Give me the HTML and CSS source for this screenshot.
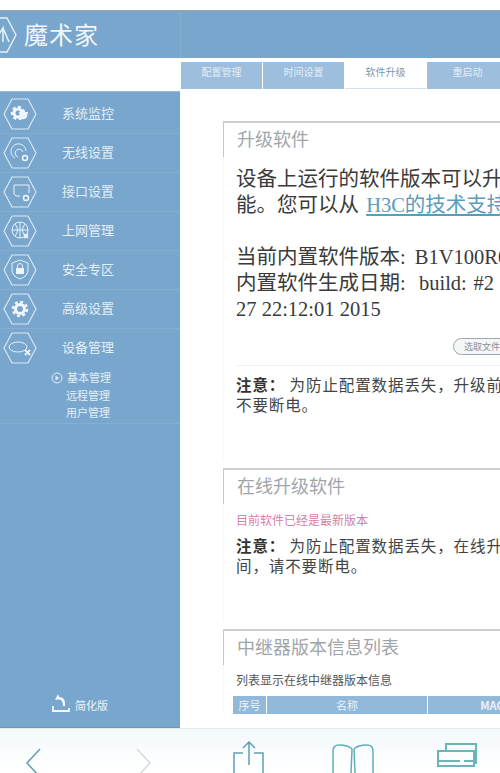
FILE: index.html
```html
<!DOCTYPE html>
<html lang="zh-CN">
  <head>
    <meta charset="UTF-8" />
    <meta name="viewport" content="width=device-width, initial-scale=1.0" />
    <title>魔术家</title>
    <link rel="stylesheet" href="styles.css">
  </head>
  <body>
    <div class="page">
      <div class="header">
        <div class="brand">
          <svg class="brand-icon" viewBox="0 0 38 36" width="38" height="36">
            <polygon points="10,1 28,1 37,18 28,35 10,35 1,18" fill="none" stroke="#e6f0f8" stroke-width="1.4" />
            <path d="M15 25 L24 11 L24 25 M24 11 L30 25" fill="none" stroke="#e6f0f8" stroke-width="1.6" />
          </svg>
          <span class="brand-name">魔术家</span>
        </div>
        <div class="header-rest"></div>
      </div>

      <div class="middle">
        <div class="left">
          <div class="sidebar">
            <div class="nav-item">
              <svg class="hex" viewBox="0 0 34 32" width="34" height="32">
                <polygon points="9,1 25,1 33,16 25,31 9,31 1,16" />
                <circle class="gear" cx="15" cy="15" r="4" />
                <circle class="teeth" cx="15" cy="15" r="6" />
                <path class="solid" d="M16 14h9l-1 5q-3 4-7 1z" />
              </svg>
              <span>系统监控</span>
            </div>
            <div class="nav-item">
              <svg class="hex" viewBox="0 0 34 32" width="34" height="32">
                <polygon points="9,1 25,1 33,16 25,31 9,31 1,16" />
                <path class="line" d="M12 21a7.500 7.500 0 1 1 11-7M15 20a4 4 0 1 1 5-5" />
                <circle class="ring" cx="22" cy="21" r="2.500" />
              </svg>
              <span>无线设置</span>
            </div>
            <div class="nav-item">
              <svg class="hex" viewBox="0 0 34 32" width="34" height="32">
                <polygon points="9,1 25,1 33,16 25,31 9,31 1,16" />
                <path class="line" d="M17 20h-4l-2-2v-9h15v8" />
                <circle class="ring" cx="23" cy="22" r="2.500" />
              </svg>
              <span>接口设置</span>
            </div>
            <div class="nav-item">
              <svg class="hex" viewBox="0 0 34 32" width="34" height="32">
                <polygon points="9,1 25,1 33,16 25,31 9,31 1,16" />
                <circle class="line" cx="17" cy="15" r="8" />
                <path class="line" d="M9 15h16M17 7v16M12 9q5 6 0 12M22 9q-5 6 0 12" />
                <path class="line thick" d="M21 19l4 4M25 19l-4 4" />
              </svg>
              <span>上网管理</span>
            </div>
            <div class="nav-item">
              <svg class="hex" viewBox="0 0 34 32" width="34" height="32">
                <polygon points="9,1 25,1 33,16 25,31 9,31 1,16" />
                <path class="line" d="M17 6l8 3v7q0 6-8 9q-8-3-8-9v-7z" />
                <rect class="solid" x="13" y="14" width="8" height="6" />
                <path class="line" d="M14.500 14v-2a2.500 2.500 0 0 1 5 0v2" />
              </svg>
              <span>安全专区</span>
            </div>
            <div class="nav-item">
              <svg class="hex" viewBox="0 0 34 32" width="34" height="32">
                <polygon points="9,1 25,1 33,16 25,31 9,31 1,16" />
                <circle class="gear" cx="17" cy="16" r="4.500" />
                <circle class="teeth" cx="17" cy="16" r="7" />
              </svg>
              <span>高级设置</span>
            </div>
            <div class="nav-item nav-open">
              <svg class="hex" viewBox="0 0 34 32" width="34" height="32">
                <polygon points="9,1 25,1 33,16 25,31 9,31 1,16" />
                <ellipse class="line" cx="15" cy="15" rx="9" ry="5" />
                <path class="line thick" d="M22 18l5 5M27 18l-5 5" />
              </svg>
              <span>设备管理</span>
            </div>
            <div class="subnav">
              <div class="sub-item">
                <svg class="sub-arrow" viewBox="0 0 12 12" width="12" height="12">
                  <circle cx="6" cy="6" r="5" fill="none" stroke="#e4eef6" />
                  <path d="M4.500 3.500l3.500 2.500-3.500 2.500z" fill="#e4eef6" />
                </svg>
                <span>基本管理</span>
              </div>
              <div class="sub-item">远程管理</div>
              <div class="sub-item">用户管理</div>
            </div>
            <div class="simple">
              <svg viewBox="0 0 20 20" width="20" height="20">
                <path d="M2 13v5h16v-3" fill="none" stroke="#f2f7fb" stroke-width="1.800" />
                <path d="M7 1l-3 6 3-.5q5-.5 5 6.500h2q1-9-6-9z" fill="#f2f7fb" />
              </svg>
              <span>简化版</span>
            </div>
          </div>
        </div>

        <div class="right">
          <div class="tabs">
            <div class="tab">配置管理</div>
            <div class="tab">时间设置</div>
            <div class="tab active">软件升级</div>
            <div class="tab">重启动</div>
          </div>
          <div class="content">
            <div class="section section-upgrade">
              <h3>升级软件</h3>
              <div class="section-body">
                <p class="big">设备上运行的软件版本可以升</p>
                <p class="big">能。您可以从 <a class="help-link" href="#">H3C的技术支持</a></p>
                <p class="big">&nbsp;</p>
                <p class="big ver">当前内置软件版本: B1V100R0</p>
                <p class="big ver-date">内置软件生成日期:&nbsp; build: #2</p>
                <p class="big">27 22:12:01 2015</p>
                <div class="file-row"><span class="file-btn">选取文件</span></div>
                <div class="note note-line">
                  <p><b>注意：</b> 为防止配置数据丢失，升级前</p>
                  <p>不要断电。</p>
                </div>
              </div>
            </div>

            <div class="section section-online">
              <h3>在线升级软件</h3>
              <div class="section-body">
                <p class="pink">目前软件已经是最新版本</p>
                <div class="note">
                  <p><b>注意：</b> 为防止配置数据丢失，在线升</p>
                  <p>间，请不要断电。</p>
                </div>
              </div>
            </div>

            <div class="section section-list">
              <h3>中继器版本信息列表</h3>
              <div class="section-body">
                <p class="small">列表显示在线中继器版本信息</p>
                <div class="table-head">
                  <div class="col-no">序号</div>
                  <div class="col-name">名称</div>
                  <div class="col-mac">MAC</div>
                </div>
              </div>
            </div>
          </div>
        </div>
      </div>

      <div class="toolbar">
        <svg class="tool tool-back" viewBox="0 0 20 30" width="20" height="30">
          <path d="M17 2L4 16l13 14" />
        </svg>
        <svg class="tool tool-next" viewBox="0 0 20 30" width="20" height="30">
          <path d="M3 2l13 14-13 14" />
        </svg>
        <svg class="tool tool-share" viewBox="0 0 34 34" width="34" height="34">
          <path d="M11 12H2v22h29V12h-9M17 24V1M11 7l6-6 6 6" />
        </svg>
        <svg class="tool tool-book" viewBox="0 0 42 30" width="42" height="30">
          <path d="M20 6q-4-4-13-4-6 0-6 6v22M22 6q4-4 13-4 6 0 6 6v22M20 6l-1 24M22 6l1 24" />
        </svg>
        <svg class="tool tool-pages" viewBox="0 0 42 30" width="42" height="30">
          <path d="M10 8V1h30v19h-2M2 8h36v15H2zM2 18h22M28 18h10" />
        </svg>
      </div>
    </div>
  </body>
</html>
```

FILE: styles.css
```css
body {
  margin: 0;
  font-family: "Liberation Serif", "Noto Sans CJK SC", serif;
  background-color: #fff;
}
p {
  margin: 0;
}
.page {
  width: 500px;
  height: 773px;
  overflow: hidden;
  display: flex;
  flex-direction: column;
}

/* top band */
.header {
  display: flex;
  height: 46px;
  margin-top: 10px;
  flex-shrink: 0;
  border-top: 2px solid #8ba4b9;
  background-color: #78a6cd;
}
.brand {
  width: 181px;
  flex-shrink: 0;
  box-sizing: border-box;
  overflow: hidden;
  display: flex;
  align-items: center;
  gap: 7px;
  border-right: 1px solid #86afd2;
}
.brand-icon {
  flex-shrink: 0;
  margin-left: -21px;
}
.brand-name {
  margin-bottom: 4px;
  font-family: "Noto Sans CJK SC", sans-serif;
  font-weight: 400;
  font-size: 24px;
  letter-spacing: 1px;
  color: #f1f6fa;
}
.header-rest {
  flex: 1;
}

.middle {
  display: flex;
  height: 670px;
  flex-shrink: 0;
}

/* sidebar */
.left {
  width: 180px;
  flex-shrink: 0;
  padding-top: 33px;
  box-sizing: border-box;
  display: flex;
}
.sidebar {
  width: 100%;
  display: flex;
  flex-direction: column;
  padding-top: 3px;
  background-color: #78a6cd;
  border-top: 1px solid #9ab8d2;
  border-bottom: 1px solid #6d95b8;
  box-sizing: border-box;
  font-family: "Noto Sans CJK SC", sans-serif;
  color: #e4eef6;
}
.nav-item {
  height: 38px;
  display: flex;
  align-items: center;
  gap: 25px;
  padding-left: 3px;
  font-size: 13px;
  border-bottom: 1px solid #84aed2;
}
.nav-item span {
  margin-bottom: 3px;
}
.nav-open {
  border-bottom: none;
}
.hex polygon {
  fill: none;
  stroke: #d8e8f4;
  stroke-width: 1.2;
}
.hex .line {
  fill: none;
  stroke: #e8f1f8;
  stroke-width: 1;
}
.hex .thick {
  stroke-width: 2;
}
.hex .solid {
  fill: #eef5fa;
}
.hex .ring {
  fill: none;
  stroke: #f2f7fb;
  stroke-width: 1.500;
}
.hex .gear {
  fill: none;
  stroke: #f2f7fb;
  stroke-width: 3;
}
.hex .teeth {
  fill: none;
  stroke: #f2f7fb;
  stroke-width: 2.500;
  stroke-dasharray: 3 2.500;
}
.subnav {
  margin-top: 2px;
  padding-bottom: 1px;
  border-bottom: 1px solid #84aed2;
  font-size: 11px;
}
.sub-item {
  height: 17.500px;
  line-height: 17.500px;
  padding-left: 66px;
}
.sub-item:first-child {
  display: flex;
  align-items: center;
  gap: 4px;
  padding-left: 51px;
}
.simple {
  margin-top: auto;
  margin-bottom: 14px;
  display: flex;
  align-items: flex-end;
  gap: 4px;
  padding-left: 51px;
  font-size: 11px;
  color: #eef5fa;
}

/* right side */
.right {
  width: 320px;
  padding-left: 1px;
  box-sizing: border-box;
  overflow: hidden;
}
.tabs {
  display: flex;
  gap: 1px;
  height: 27px;
  margin-top: 4px;
  width: 340px;
  font-family: "Noto Sans CJK SC", sans-serif;
}
.tab {
  width: 81px;
  line-height: 20px;
  text-align: center;
  font-size: 10px;
  color: #e2edf6;
  background-color: #9dbfdd;
}
.tab.active {
  color: #7f98aa;
  background-color: #fff;
  border-bottom: 1px solid #d5dfe6;
  box-sizing: border-box;
}
.content {
  padding: 32px 0 0 42px;
  width: 500px;
  box-sizing: border-box;
}
.section {
  width: 430px;
  display: flex;
  flex-direction: column;
}
.section h3 {
  margin: 0;
  height: 34px;
  line-height: 30px;
  padding-left: 13px;
  border-top: 2px solid #cdcfd1;
  border-left: 1px solid #c4c6c8;
  font-family: "Noto Sans CJK SC", sans-serif;
  font-weight: 400;
  font-size: 18px;
  color: #a0a5aa;
}
.section-body {
  flex: 1;
  margin-bottom: 8px;
  border-left: 1px solid #f7f8f8;
  padding-left: 12px;
  overflow: hidden;
  white-space: nowrap;
}
.section-upgrade {
  height: 347px;
}
.section-online {
  height: 161px;
}
.big {
  font-size: 20.500px;
  line-height: 26px;
  color: #3a3a3a;
}
.big:first-child {
  margin-top: 9px;
}
.help-link {
  margin-left: 2px;
  color: #5a9cbc;
}
.ver {
  word-spacing: 4px;
}
.ver-date {
  word-spacing: 1.500px;
}
.file-row {
  margin-top: 14px;
  height: 29px;
  padding-left: 217px;
}
.file-btn {
  display: inline-block;
  height: 15px;
  line-height: 15px;
  padding: 0 16px 0 10px;
  font-size: 9px;
  font-family: "Noto Sans CJK SC", sans-serif;
  color: #8a8f96;
  border: 1px solid #9fa6ad;
  border-radius: 9px;
  background-color: #f4f6f8;
}
.note {
  font-family: "Noto Sans CJK SC", sans-serif;
  font-size: 15.500px;
  letter-spacing: 0.900px;
  line-height: 20px;
  color: #444;
}
.note b {
  color: #333;
  font-weight: 700;
}
.note-line {
  padding-top: 8px;
  border-top: 1px solid #f0f0f0;
}
.pink {
  margin-top: 7px;
  margin-bottom: 6px;
  font-family: "Noto Sans CJK SC", sans-serif;
  font-size: 12px;
  line-height: 18px;
  color: #d680a6;
}
.small {
  margin-top: 6px;
  font-family: "Noto Sans CJK SC", sans-serif;
  font-size: 12px;
  line-height: 18px;
  color: #555;
}
.table-head {
  display: flex;
  gap: 1px;
  height: 18px;
  margin: 7px 0 0 -3px;
  font-family: "Noto Sans CJK SC", sans-serif;
  font-size: 11px;
  line-height: 18px;
  text-align: center;
  color: #eaf2f8;
}
.table-head div {
  background-color: #93b9da;
}
.col-no {
  width: 33px;
}
.col-name {
  width: 160px;
}
.col-mac {
  width: 128px;
  font-weight: 700;
}

/* browser toolbar */
.toolbar {
  position: relative;
  flex: 1;
  border-top: 1px solid #e6eaec;
  background: linear-gradient(#f4f9fc, #fff);
}
.tool {
  position: absolute;
  fill: none;
  stroke: #5f9fb5;
  stroke-width: 1.500;
}
.tool-back {
  left: 23px;
  top: 18px;
}
.tool-next {
  left: 134px;
  top: 18px;
  stroke: #d4dbe0;
}
.tool-share {
  left: 232px;
  top: 12px;
}
.tool-book {
  left: 332px;
  top: 14px;
  stroke: #63adb8;
}
.tool-pages {
  left: 436px;
  top: 14px;
  stroke: #6ab4bc;
  stroke-width: 2;
}
```
